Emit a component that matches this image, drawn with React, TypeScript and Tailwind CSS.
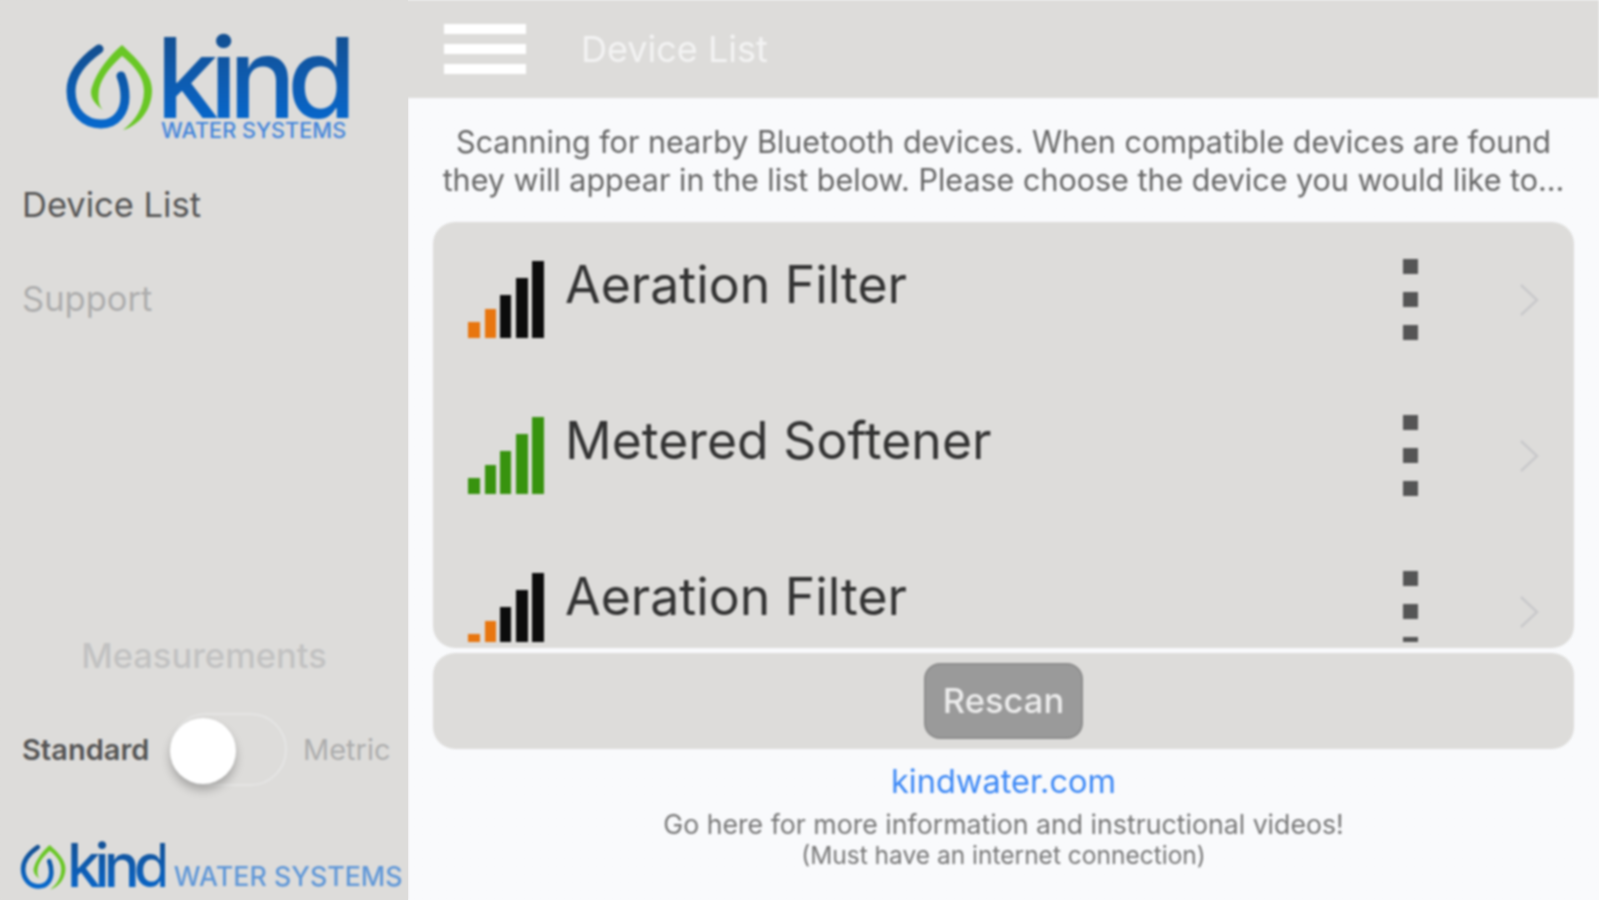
import React from 'react';

const devices = [
  { name: 'Aeration Filter', strong: 2, color: 'bg-[#e8760f]' },
  { name: 'Metered Softener', strong: 5, color: 'bg-[#38930f]' },
  { name: 'Aeration Filter', strong: 2, color: 'bg-[#e8760f]' },
];

function KindDrop({ className }: { className: string }) {
  return (
    <svg className={className} viewBox="0 0 90 92" fill="none">
      <defs>
        <linearGradient id="dropBlue" x1="0" y1="0" x2="0" y2="1">
          <stop offset="0" stopColor="#134f91" />
          <stop offset="1" stopColor="#0768cc" />
        </linearGradient>
      </defs>
      <path
        d="M57 2C70 14 87 30 87 47C87 66 75 82 58 87C70 78 79 65 79 48C79 32 66 20 57 13C47 22 37 33 34 46C33 55 33 62 38 67C28 60 24 52 27 44C32 28 45 12 57 2Z"
        fill="#69c725"
      />
      <path
        d="M34 6C14 20 6 35 6 48C6 69 20 81 36 81C52 81 60 68 60 54C60 44 58 38 56 33"
        stroke="url(#dropBlue)"
        strokeWidth="9"
        strokeLinecap="round"
      />
    </svg>
  );
}

function SignalBars({ strong, color }: { strong: number; color: string }) {
  const bars = ['h-[16px] w-[12px]', 'h-[29px] w-[11px]', 'h-[43px] w-[11px]', 'h-[60px] w-[12px]', 'h-[77px] w-[12px]'];
  return (
    <div className="flex h-[77px] w-[78px] shrink-0 items-end gap-[4.5px]">
      {bars.map((size, i) => (
        <div key={i} className={`${size} ${i < strong ? color : 'bg-[#0c0c0c]'}`} />
      ))}
    </div>
  );
}

function DeviceRow({ name, strong, color }: { name: string; strong: number; color: string }) {
  return (
    <div className="flex h-[156px] shrink-0 items-start pl-[35px] pr-[35px] pt-[39px]">
      <SignalBars strong={strong} color={color} />
      <div className="ml-[19px] mt-[-8px] flex-1 text-[51.7px] leading-[63px] text-[#333333]">{name}</div>
      <div className="mr-[101px] mt-[-2px] flex flex-col gap-[18px]">
        <div className="h-[15px] w-[15px] bg-[#555555]" />
        <div className="h-[15px] w-[15px] bg-[#555555]" />
        <div className="h-[15px] w-[15px] bg-[#555555]" />
      </div>
      <svg className="mt-[23px] h-[32px] w-[20px]" viewBox="0 0 20 32" fill="none">
        <path d="M2 1L18 16L2 31" stroke="#c9c9cb" strokeWidth="2.5" />
      </svg>
    </div>
  );
}

export default function App() {
  return (
    <div className="h-[900px] w-full overflow-hidden bg-linear-to-r from-[#dddcda] from-[408px] to-[#f9fafc] to-[408px]">
      <div className="flex h-full blur-[1.2px] font-['Inter',sans-serif]">
        <aside className="flex w-[408px] shrink-0 flex-col bg-[#dddcda]">
          <div className="flex h-[150px] items-start pl-[65px] pt-[43px]">
            <KindDrop className="h-[92px] w-[90px] shrink-0" />
            <div className="ml-[6px] mt-[-10px] flex w-[190px] flex-col">
              <span className="ml-[-5px] bg-linear-to-b from-[#134f91] to-[#0667cc] bg-clip-text text-[112px] leading-[88px] font-medium tracking-[-9px] text-transparent">
                kind
              </span>
              <span className="whitespace-nowrap text-[21.7px] leading-[18px] font-medium text-[#4284da]">
                WATER SYSTEMS
              </span>
            </div>
          </div>
          <nav className="flex flex-col gap-[52px] pl-[22px] pt-[34px] text-[34.5px] leading-[42px]">
            <div className="text-[#555555]">Device List</div>
            <div className="text-[#adadad]">Support</div>
          </nav>
          <div className="mt-auto text-center text-[34.5px] leading-[40px] font-medium text-[#c2c2c2]">Measurements</div>
          <div className="mt-[37px] flex items-center pl-[22px] text-[29px]">
            <span className="w-[148px] font-semibold text-[#555555]">Standard</span>
            <div className="relative h-[73px] w-[117px] shrink-0 rounded-full border-2 border-[#e5e5e4]">
              <div className="absolute left-[-2px] top-[3px] h-[66px] w-[66px] rounded-full bg-white shadow-[0_6px_10px_rgba(0,0,0,0.25)]" />
            </div>
            <span className="ml-[16px] text-[#adadad]">Metric</span>
          </div>
          <div className="mb-[7px] mt-[51px] flex items-end pl-[20px]">
            <KindDrop className="h-[50px] w-[47px] shrink-0" />
            <span className="bg-linear-to-b from-[#134f91] to-[#0667cc] bg-clip-text text-[60px] leading-[56px] font-medium tracking-[-6px] text-transparent">
              kind
            </span>
            <span className="ml-[9px] whitespace-nowrap text-[26.8px] leading-[34px] font-medium text-[#5f97d8]">
              WATER SYSTEMS
            </span>
          </div>
        </aside>

        <main className="flex min-w-0 flex-1 flex-col">
          <header className="flex h-[98px] shrink-0 items-center bg-[#dddcda]">
            <div className="ml-[36px] flex w-[82px] flex-col gap-[10px]">
              <div className="h-[10px] bg-white" />
              <div className="h-[10px] bg-white" />
              <div className="h-[10px] bg-white" />
            </div>
            <div className="ml-[55px] text-[36px] text-[#f3f3f3]">Device List</div>
          </header>

          <div className="pt-[25px] text-center text-[30.5px] leading-[37.5px] whitespace-nowrap text-[#666666]">
            <div>Scanning for nearby Bluetooth devices. When compatible devices are found</div>
            <div>they will appear in the list below. Please choose the device you would like to...</div>
          </div>

          <div className="mx-[25px] mt-[24px] h-[426px] overflow-hidden rounded-[22px] bg-[#dddcda] pb-[6px]">
            <div className="flex h-full flex-col overflow-hidden">
              {devices.map((d, i) => (
                <DeviceRow key={i} {...d} />
              ))}
            </div>
          </div>

          <div className="mx-[25px] mt-[5px] flex h-[96px] items-center justify-center rounded-[22px] bg-[#dddcda]">
            <button className="h-[76px] w-[159px] rounded-[16px] border-2 border-[#8d8d8d] bg-[#9a9a9a] text-[34.5px] font-medium text-[#ececec]">
              Rescan
            </button>
          </div>

          <div className="pt-[13px] text-center">
            <div className="text-[32.5px] leading-[40px] text-[#3b87f5]">kindwater.com</div>
            <div className="mt-[6px] text-[26.7px] leading-[32px] text-[#777777]">
              Go here for more information and instructional videos!
            </div>
            <div className="text-[24.5px] leading-[30px] text-[#777777]">(Must have an internet connection)</div>
          </div>
        </main>
      </div>
    </div>
  );
}
